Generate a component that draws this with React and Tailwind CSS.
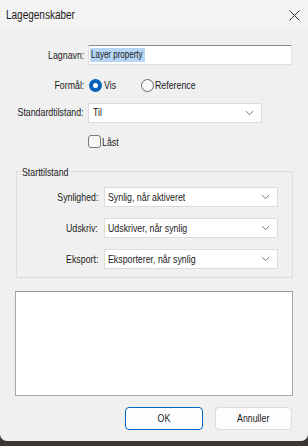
import React from "react";

const font = { fontFamily: '"Liberation Sans", Arial, sans-serif' };

function N({ children, origin = "origin-left", className = "" }) {
  return (
    <span className={"inline-block whitespace-nowrap scale-x-[0.8] " + origin + " " + className}>
      {children}
    </span>
  );
}

function Chevron() {
  return (
    <svg width="9" height="6" viewBox="0 0 9 6" className="shrink-0">
      <path d="M0.8 1 L4.5 4.6 L8.2 1" fill="none" stroke="#7a7a7a" strokeWidth="1" />
    </svg>
  );
}

function Select({ value, className }) {
  return (
    <div className={"flex h-[20px] items-center justify-between border border-[#dcdcdc] bg-white pr-[7px] text-[11px] text-[#1a1a1a] " + className}>
      <N>{value}</N>
      <Chevron />
    </div>
  );
}

export default function App() {
  return (
    <div className="h-[446px] w-[308px] bg-[#3b3633]" style={font}>
      <div className="flex h-[441px] flex-col rounded-b-[7px] bg-[#f0f0f0]">
        {/* title bar */}
        <div className="flex h-[30px] items-center justify-between bg-[#f3f3f3] pl-[6px] pr-[8px]">
          <N className="text-[12.5px] text-[#1a1a1a]">Lagegenskaber</N>
          <svg width="11" height="11" viewBox="0 0 11 11">
            <path d="M0.5 0.5 L10.5 10.5 M10.5 0.5 L0.5 10.5" stroke="#333" strokeWidth="1" />
          </svg>
        </div>

        <div className="flex flex-col text-[11px] text-[#1a1a1a]">
          {/* Lagnavn */}
          <div className="mt-[15px] flex items-center">
            <span className="w-[85px] pr-[1px] text-right"><N origin="origin-right">Lagnavn:</N></span>
            <div className="ml-[3px] flex h-[20px] w-[204px] items-center border border-[#e0e0e0] border-t-[#8a8a8a] bg-white pl-[1px]">
              <span className="inline-block w-[55px] bg-[#b7d5f5] px-[1px] text-[10px] leading-[14px]"><N>Layer property</N></span>
            </div>
          </div>

          {/* Formål */}
          <div className="mt-[12px] flex items-center">
            <span className="w-[85px] pr-[1px] text-right"><N origin="origin-right">Formål:</N></span>
            <div className="ml-[4px] flex items-center">
              <span className="flex h-[13px] w-[13px] items-center justify-center rounded-full bg-[#0062b8]">
                <span className="h-[5px] w-[5px] rounded-full bg-white" />
              </span>
              <N className="ml-[2px]">Vis</N>
            </div>
            <div className="ml-[22px] flex items-center">
              <span className="h-[13px] w-[13px] rounded-full border border-[#6b6b6b] bg-[#f7f7f7]" />
              <N className="ml-[1px]">Reference</N>
            </div>
          </div>

          {/* Standardtilstand */}
          <div className="mt-[9px] flex items-center">
            <span className="w-[85px] pr-[1px] text-right"><N origin="origin-right">Standardtilstand:</N></span>
            <Select value="Til" className="ml-[3px] w-[174px] pl-[4px]" />
          </div>

          {/* Låst */}
          <div className="ml-[88px] mt-[11px] flex items-center">
            <span className="h-[13px] w-[13px] rounded-[3px] border border-[#7a7a7a] bg-[#f6f6f6]" />
            <N className="ml-[1px]">Låst</N>
          </div>

          {/* Starttilstand group */}
          <div className="relative ml-[16px] mt-[21px] h-[107px] w-[277px] border border-[#dcdcdc]">
            <span className="absolute left-[4px] top-[-8px] w-[49px] overflow-visible bg-[#f0f0f0] pl-[1px]"><N>Starttilstand</N></span>
            <div className="flex flex-col gap-[11px] pt-[15px]">
              <div className="flex items-center">
                <span className="w-[81px] text-right"><N origin="origin-right">Synlighed:</N></span>
                <Select value="Synlig, når aktiveret" className="ml-[6px] w-[174px] pl-[3px]" />
              </div>
              <div className="flex items-center">
                <span className="w-[81px] text-right"><N origin="origin-right">Udskriv:</N></span>
                <Select value="Udskriver, når synlig" className="ml-[6px] w-[174px] pl-[3px]" />
              </div>
              <div className="flex items-center">
                <span className="w-[81px] text-right"><N origin="origin-right">Eksport:</N></span>
                <Select value="Eksporterer, når synlig" className="ml-[6px] w-[174px] pl-[3px]" />
              </div>
            </div>
          </div>

          {/* big white box */}
          <div className="ml-[15px] mt-[13px] h-[105px] w-[278px] border border-[#a8a8a8] border-t-[#9a9a9a] bg-white" />

          {/* buttons */}
          <div className="mt-[11px] flex justify-end gap-[12px] pr-[16px]">
            <button className="flex h-[23px] w-[78px] items-center justify-center rounded-[4px] border border-[#0067c0] bg-[#fdfdfd] text-[11px] text-[#1a1a1a]"><N origin="origin-center">OK</N></button>
            <button className="flex h-[23px] w-[77px] items-center justify-center rounded-[4px] border border-[#dcdcdc] bg-[#fdfdfd] text-[11px] text-[#1a1a1a]"><N origin="origin-center">Annuller</N></button>
          </div>
        </div>
      </div>
    </div>
  );
}
